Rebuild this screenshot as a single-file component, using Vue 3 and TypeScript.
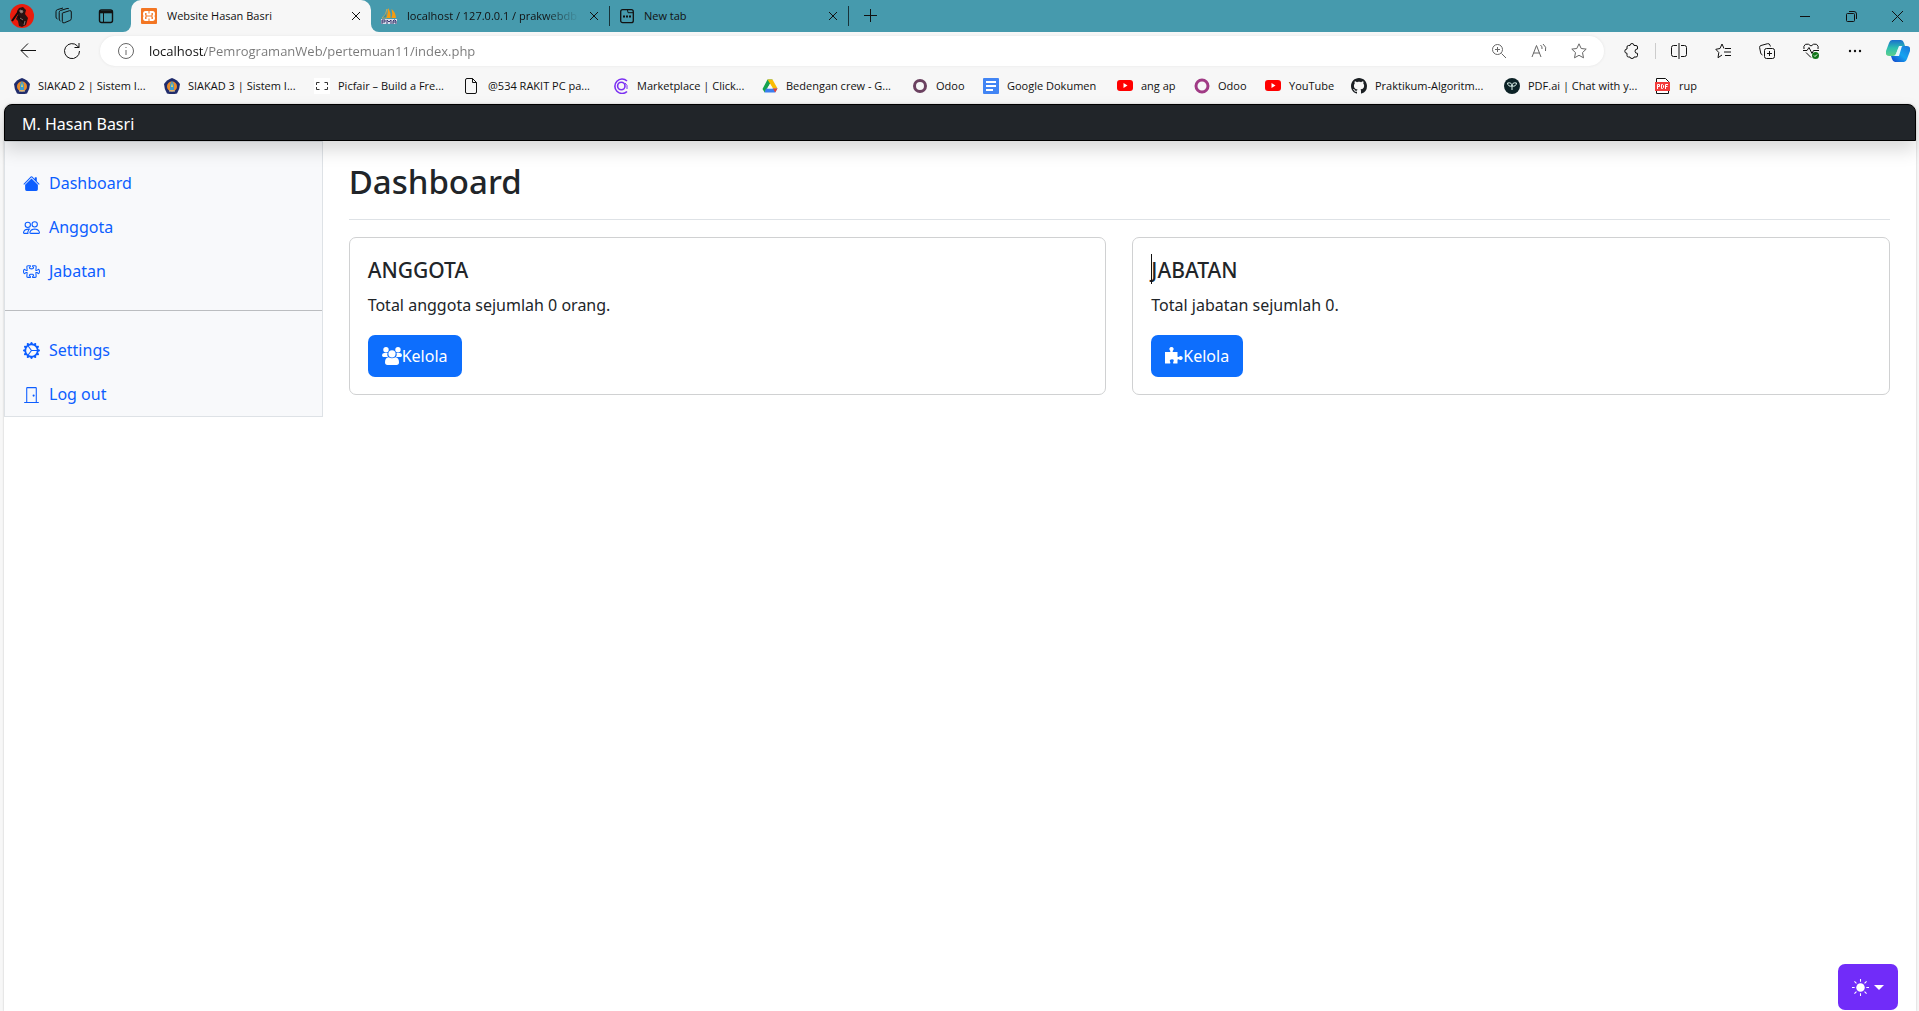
<script setup lang="ts">
import { ref } from 'vue'

interface Bookmark {
  icon: string
  label: string
  width: number
}

interface NavItem {
  icon: string
  label: string
}

const url = ref('localhost/PemrogramanWeb/pertemuan11/index.php')

const bookmarks: Bookmark[] = [
  { icon: 'campus', label: 'SIAKAD 2 | Sistem I...', width: 150 },
  { icon: 'campus', label: 'SIAKAD 3 | Sistem I...', width: 150 },
  { icon: 'frame', label: 'Picfair – Build a Fre...', width: 150 },
  { icon: 'file', label: '@534 RAKIT PC pa...', width: 149 },
  { icon: 'market', label: 'Marketplace | Click...', width: 149 },
  { icon: 'drive', label: 'Bedengan crew - G...', width: 150 },
  { icon: 'odoo-dark', label: 'Odoo', width: 71 },
  { icon: 'docs', label: 'Google Dokumen', width: 134 },
  { icon: 'youtube', label: 'ang ap', width: 77 },
  { icon: 'odoo', label: 'Odoo', width: 71 },
  { icon: 'youtube', label: 'YouTube', width: 86 },
  { icon: 'github', label: 'Praktikum-Algoritm...', width: 153 },
  { icon: 'sprout', label: 'PDF.ai | Chat with y...', width: 151 },
  { icon: 'pdf', label: 'rup', width: 60 },
]

const mainNav: NavItem[] = [
  { icon: 'house', label: 'Dashboard' },
  { icon: 'people', label: 'Anggota' },
  { icon: 'puzzle', label: 'Jabatan' },
]

const userNav: NavItem[] = [
  { icon: 'gear', label: 'Settings' },
  { icon: 'door', label: 'Log out' },
]

const navPaths: Record<string, string[]> = {
  house: [
    'M8.707 1.5a1 1 0 0 0-1.414 0L.646 8.146a.5.5 0 0 0 .708.708L8 2.207l6.646 6.647a.5.5 0 0 0 .708-.708L13 5.793V2.5a.5.5 0 0 0-.5-.5h-1a.5.5 0 0 0-.5.5v1.293z',
    'm8 3.293 6 6V13.5a1.5 1.5 0 0 1-1.5 1.5h-9A1.5 1.5 0 0 1 2 13.5V9.293z',
  ],
  people: [
    'M15 14s1 0 1-1-1-4-5-4-5 3-5 4 1 1 1 1zm-7.978-1L7 12.996c.001-.264.167-1.03.76-1.72C8.312 10.629 9.282 10 11 10c1.717 0 2.687.63 3.24 1.276.593.69.758 1.457.76 1.72l-.008.002-.014.002zM11 7a2 2 0 1 0 0-4 2 2 0 0 0 0 4m3-2a3 3 0 1 1-6 0 3 3 0 0 1 6 0M6.936 9.28a6 6 0 0 0-1.23-.247A7 7 0 0 0 5 9c-4 0-5 3-5 4q0 1 1 1h4.216A2.24 2.24 0 0 1 5 13c0-1.01.377-2.042 1.09-2.904.243-.294.526-.569.846-.816M4.92 10A5.5 5.5 0 0 0 4 13H1c0-.26.164-1.03.76-1.724.545-.636 1.492-1.256 3.16-1.275ZM1.5 5.5a3 3 0 1 1 6 0 3 3 0 0 1-6 0m3-2a2 2 0 1 0 0 4 2 2 0 0 0 0-4',
  ],
  puzzle: [
    'M3.112 3.645A1.5 1.5 0 0 1 4.605 2H7a.5.5 0 0 1 .5.5v.382c0 .696-.497 1.182-.872 1.469a.5.5 0 0 0-.115.118l-.012.025L6.5 4.5v.003l.003.01q.005.015.036.053a.9.9 0 0 0 .27.194C7.09 4.9 7.51 5 8 5c.492 0 .912-.1 1.19-.24a.9.9 0 0 0 .271-.194.2.2 0 0 0 .039-.063v-.009l-.012-.025a.5.5 0 0 0-.115-.118c-.375-.287-.872-.773-.872-1.469V2.5A.5.5 0 0 1 9 2h2.395a1.5 1.5 0 0 1 1.493 1.645L12.645 6.5h.237c.195 0 .42-.147.675-.48.21-.274.528-.52.943-.52.568 0 .947.447 1.154.862C15.877 6.807 16 7.387 16 8s-.123 1.193-.346 1.638c-.207.415-.586.862-1.154.862-.415 0-.733-.246-.943-.52-.255-.333-.48-.48-.675-.48h-.237l.243 2.855A1.5 1.5 0 0 1 11.395 14H9a.5.5 0 0 1-.5-.5v-.382c0-.696.497-1.182.872-1.469a.5.5 0 0 0 .115-.118l.012-.025.001-.006v-.003l-.003-.01a.2.2 0 0 0-.036-.053.9.9 0 0 0-.27-.194C8.91 11.1 8.49 11 8 11s-.912.1-1.19.24a.9.9 0 0 0-.271.194.2.2 0 0 0-.039.063v.009l.012.025c.016.027.05.068.115.118.375.287.872.773.872 1.469v.382a.5.5 0 0 1-.5.5H4.605a1.5 1.5 0 0 1-1.493-1.645L3.356 9.5h-.238c-.195 0-.42.147-.675.48-.21.274-.528.52-.943.52-.568 0-.947-.447-1.154-.862C.123 9.193 0 8.613 0 8s.123-1.193.346-1.638C.553 5.947.932 5.5 1.5 5.5c.415 0 .733.246.943.52.255.333.48.48.675.48h.238zM4.605 3a.5.5 0 0 0-.498.55l.001.007.29 3.4A.5.5 0 0 1 3.9 7.5h-.782c-.696 0-1.182-.497-1.469-.872a.5.5 0 0 0-.118-.115l-.025-.012L1.5 6.5h-.003l-.01.003a.2.2 0 0 0-.053.036.9.9 0 0 0-.194.27C1.1 7.09 1 7.51 1 8c0 .491.1.912.24 1.19.07.14.14.225.194.271a.2.2 0 0 0 .063.039H1.5l.006-.001.025-.012a.5.5 0 0 0 .118-.115c.287-.375.773-.872 1.469-.872H3.9a.5.5 0 0 1 .498.542l-.29 3.408a.5.5 0 0 0 .497.55h1.878c-.048-.166-.195-.352-.463-.557-.274-.21-.52-.528-.52-.943 0-.568.447-.947.862-1.154C6.807 10.123 7.387 10 8 10s1.193.123 1.638.346c.415.207.862.586.862 1.154 0 .415-.246.733-.52.943-.268.205-.415.39-.463.557h1.878a.5.5 0 0 0 .498-.55l-.001-.007-.29-3.4A.5.5 0 0 1 12.1 8.5h.782c.696 0 1.182.497 1.469.872.05.065.091.099.118.115l.025.012.006.001h.003l.01-.003a.2.2 0 0 0 .053-.036.9.9 0 0 0 .194-.27c.14-.28.24-.7.24-1.191s-.1-.912-.24-1.19a.9.9 0 0 0-.194-.271.2.2 0 0 0-.063-.039H14.5l-.006.001-.025.012a.5.5 0 0 0-.118.115c-.287.375-.773.872-1.469.872H12.1a.5.5 0 0 1-.498-.543l.29-3.407a.5.5 0 0 0-.497-.55H9.517c.048.166.195.352.463.557.274.21.52.528.52.943 0 .568-.447.947-.862 1.154C9.193 5.877 8.613 6 8 6s-1.193-.123-1.638-.346C5.947 5.447 5.5 5.068 5.5 4.5c0-.415.246-.733.52-.943.268-.205.415-.39.463-.557z',
  ],
  gear: [
    'M7.068.727c.243-.97 1.62-.97 1.864 0l.071.286a.96.96 0 0 0 1.622.434l.205-.211c.695-.719 1.888-.03 1.613.931l-.08.284a.96.96 0 0 0 1.187 1.187l.283-.081c.96-.275 1.65.918.931 1.613l-.211.205a.96.96 0 0 0 .434 1.622l.286.071c.97.243.97 1.62 0 1.864l-.286.071a.96.96 0 0 0-.434 1.622l.211.205c.719.695.03 1.888-.931 1.613l-.284-.08a.96.96 0 0 0-1.187 1.187l.081.283c.275.96-.918 1.65-1.613.931l-.205-.211a.96.96 0 0 0-1.622.434l-.071.286c-.243.97-1.62.97-1.864 0l-.071-.286a.96.96 0 0 0-1.622-.434l-.205.211c-.695.719-1.888.03-1.613-.931l.08-.284a.96.96 0 0 0-1.186-1.187l-.284.081c-.96.275-1.65-.918-.931-1.613l.211-.205a.96.96 0 0 0-.434-1.622l-.286-.071c-.97-.243-.97-1.62 0-1.864l.286-.071a.96.96 0 0 0 .434-1.622l-.211-.205c-.719-.695-.03-1.888.931-1.613l.284.08a.96.96 0 0 0 1.187-1.186l-.081-.284c-.275-.96.918-1.65 1.613-.931l.205.211a.96.96 0 0 0 1.622-.434zM12.973 8.5H8.25l-2.834 3.779A4.998 4.998 0 0 0 12.973 8.5m0-1a4.998 4.998 0 0 0-7.557-3.779l2.834 3.78zM5.048 3.967l-.087.065zm-.431.355A4.98 4.98 0 0 0 3.002 8c0 1.455.622 2.765 1.615 3.678L7.375 8zm.344 7.646.087.065z',
  ],
  door: [
    'M3 2a1 1 0 0 1 1-1h8a1 1 0 0 1 1 1v13h1.5a.5.5 0 0 1 0 1h-13a.5.5 0 0 1 0-1H3zm1 13h8V2H4z',
    'M9 9a1 1 0 1 0 2 0 1 1 0 0 0-2 0',
  ],
}
</script>

<template>
  <div class="window">
    <div class="tab-strip">
      <div class="strip-tools">
        <button class="tool" aria-label="Profile">
          <svg width="24" height="24" viewBox="0 0 24 24">
            <circle cx="12" cy="12" r="12" fill="#ea1c0d" />
            <path d="M9 4l4-1 3 3-1 4 3 4-2 7-4 2-3-1-1-5-2-2 2-4-1-4z" fill="#2a1212" />
            <path d="M2 17L9 7M8 12l6 7" stroke="#160a0a" stroke-width="2" />
            <path d="M10 6l3 1-1 2-2-1zM10 14l3 2M15 17l-1 4" fill="#a58a84" stroke="#8a746f" stroke-width="1" />
          </svg>
        </button>
        <button class="tool" aria-label="Workspaces">
          <svg width="18" height="18" viewBox="0 0 18 18" class="line">
            <path d="M7.500 6l7-2.300q1.800-.4 1.800 1.300v6.500q0 1.500-1.500 2l-5.500 2.300q-2 .6-2-1.400V7q0-.8.2-1z" />
            <path d="M5.500 14q-1.300-.2-1.300-2V5.500Q4.200 4 5.500 3.500L12 1.500q1.500-.4 2 .5M2.500 12Q1 11.700 1 10V4.500Q1 3 2.500 2.600L8 1" />
          </svg>
        </button>
        <button class="tool" aria-label="Tab actions">
          <svg width="16" height="16" viewBox="0 0 16 16" class="line">
            <rect x="1.500" y="2" width="13" height="12.500" rx="2" stroke-width="1.400" />
            <path d="M1.500 4h13" stroke-width="2.600" />
            <path d="M5.500 5v9" />
          </svg>
        </button>
      </div>

      <div class="tab active">
        <svg width="16" height="16" viewBox="0 0 16 16">
          <rect width="16" height="16" rx="1" fill="#f37623" />
          <path d="M4.500 4h2v2.500h3V4h2q1.500 0 1.500 2t-1.500 2q1.500 0 1.500 2t-1.500 2h-2V9.500h-3V12h-2Q3 12 3 10t1.500-2Q3 8 3 6t1.500-2z" fill="none" stroke="#fff" stroke-width="2" />
        </svg>
        <span class="tab-title">Website Hasan Basri</span>
        <button class="tab-close" aria-label="Close tab">
          <svg width="10" height="10" viewBox="0 0 10 10" class="line"><path d="M1 1l8 8M9 1L1 9" /></svg>
        </button>
      </div>

      <div class="strip-rest">
        <div class="tab">
          <svg width="16" height="16" viewBox="0 0 16 16">
            <path d="M6 1v9H1q4-3 5-9z" fill="#3d8fa0" stroke="#e8b04c" stroke-width=".6" />
            <path d="M7 0q3 4 2.500 10H5.500Q7.500 5 7 0z" fill="#f89c0e" />
            <path d="M10.500 1q4 3 4.500 9h-4.500q1.500-4 0-9z" fill="#f89c0e" />
            <path d="M0 11h16v5H0z" fill="#d5dbe8" />
            <path d="M1 16v-4h3v2H1M6 16v-4l2 2 2-2v4M12 16v-3l1-1h1l1 1v3M12 14h3" fill="none" stroke="#37366f" />
          </svg>
          <span class="tab-title fade">localhost / 127.0.0.1 / prakwebdb</span>
          <button class="tab-close" aria-label="Close tab">
            <svg width="10" height="10" viewBox="0 0 10 10" class="line"><path d="M1 1l8 8M9 1L1 9" /></svg>
          </button>
        </div>
        <div class="tab divided">
          <svg width="14" height="16" viewBox="0 0 14 16" class="line">
            <rect x=".7" y="1.700" width="12.600" height="13" rx="2" stroke-width="1.300" />
            <path d="M7.500 2l.5 2.700h5" />
            <path d="M3 8.500h2M6 8.500h2M9 8.500h2" stroke-width="2" />
          </svg>
          <span class="tab-title">New tab</span>
          <button class="tab-close" aria-label="Close tab">
            <svg width="10" height="10" viewBox="0 0 10 10" class="line"><path d="M1 1l8 8M9 1L1 9" /></svg>
          </button>
        </div>
        <button class="tool new-tab" aria-label="New tab">
          <svg width="14" height="14" viewBox="0 0 14 14" class="line"><path d="M6.500 0v13M0 6.500h13" /></svg>
        </button>

        <div class="window-controls">
          <button class="tool" aria-label="Minimize">
            <svg width="11" height="11" viewBox="0 0 11 11" class="line"><path d="M0 5.500h10" /></svg>
          </button>
          <button class="tool" aria-label="Restore">
            <svg width="11" height="11" viewBox="0 0 11 11" class="line">
              <rect x=".5" y="2.500" width="8" height="8" rx="1" />
              <path d="M3 .5h5q2.500 0 2.500 2.500v5" />
            </svg>
          </button>
          <button class="tool" aria-label="Close">
            <svg width="11" height="11" viewBox="0 0 11 11" class="line"><path d="M0 0l11 11M11 0L0 11" /></svg>
          </button>
        </div>
      </div>
    </div>

    <div class="toolbar">
      <button class="tool" aria-label="Back">
        <svg width="16" height="16" viewBox="0 0 16 16" class="line"><path d="M16 7.500H1M8 .5l-7 7 7 7" /></svg>
      </button>
      <button class="tool" aria-label="Refresh">
        <svg width="18" height="18" viewBox="0 0 18 18" class="line">
          <path d="M16.500 9A7.500 7.500 0 1 1 14.500 4L16 5.500M16 1v4.500h-4.500" />
        </svg>
      </button>
      <div class="address">
        <button class="tool grey" aria-label="Site information">
          <svg width="16" height="16" viewBox="0 0 16 16" class="line">
            <circle cx="8" cy="8" r="7.500" />
            <path d="M8 7v5M8 4v1" />
          </svg>
        </button>
        <input v-model="url" class="url" type="text" aria-label="Address" spellcheck="false" />
        <div class="address-tools">
          <button class="tool grey" aria-label="Zoom">
            <svg width="14" height="14" viewBox="0 0 14 14" class="line">
              <circle cx="5.500" cy="5.500" r="5" />
              <path d="M9.500 9.500L14 14M3 5.500h5M5.500 3v5" />
            </svg>
          </button>
          <button class="tool grey" aria-label="Read aloud">
            <svg width="16" height="16" viewBox="0 0 16 16" class="line">
              <path d="M1 14L5.500 2.500L10 14M2.500 10h6M9.500 2q2 1.500 1.500 4M12 1q4 3 2.500 7" />
            </svg>
          </button>
          <button class="tool grey" aria-label="Add to favorites">
            <svg width="16" height="16" viewBox="0 0 16 16" class="line">
              <path d="M8 .8l2.200 4.700 5 .6-3.700 3.500 1 5.200L8 12.300l-4.500 2.500 1-5.200L.8 6.100l5-.6z" />
            </svg>
          </button>
        </div>
      </div>
      <div class="toolbar-actions">
        <button class="tool" aria-label="Extensions">
          <svg width="16" height="16" viewBox="0 0 16 16" class="line">
            <path d="M4.500 2.500H6q0-2 2-2t2 2h2q1.500 0 1.500 1.500v2q-2.500 0-2.500 2.200t2.500 2.200V12.500q0 1.500-1.500 1.500h-2q0 1.500-2 1.500T6 14H4.500Q3 14 3 12.500v-2.200Q.8 10.300.8 8.200T3 6V4q0-1.500 1.500-1.500z" />
          </svg>
        </button>
        <span class="separator"></span>
        <button class="tool" aria-label="Split screen">
          <svg width="16" height="16" viewBox="0 0 16 16" class="line">
            <path d="M6 2.500H2.500Q.5 2.500.5 4.500v7q0 2 2 2H6M10 2.500h3.500q2 0 2 2v7q0 2-2 2H10M8 0v16" />
          </svg>
        </button>
        <button class="tool" aria-label="Favorites">
          <svg width="16" height="16" viewBox="0 0 16 16" class="line">
            <path d="M9 5.500L7 1 5 5.500.8 6.300l3 3.200-.8 5.200L7 12M10 5.500h6M9 9h7M10 12.500h6" />
          </svg>
        </button>
        <button class="tool" aria-label="Collections">
          <svg width="16" height="16" viewBox="0 0 16 16" class="line">
            <rect x="5.500" y="5.500" width="10" height="10" rx="2" />
            <path d="M10.500 8v5M8 10.500h5M3.500 12Q2 11.500 1.700 10L.6 4.500Q.3 3 2 2.500L8.500.7q2-.4 2.500 1.500l.4 1.300" />
          </svg>
        </button>
        <button class="tool" aria-label="Browser essentials">
          <svg width="16" height="16" viewBox="0 0 16 16" class="line">
            <path d="M1 6Q0 3 2.500 1.300 5.500.2 8 3q2.500-2.800 5.500-1.700Q16 3 15 6M3 9.500l5 5M0 7.500h4L6 4.500l3 6 1.500-3H16" />
            <circle cx="12.500" cy="12.500" r="3.500" fill="#12751a" stroke="none" />
            <path d="M11 12.500l1 1 2-2" stroke="#fff" />
          </svg>
        </button>
        <button class="tool" aria-label="Settings and more">
          <svg width="14" height="4" viewBox="0 0 14 4">
            <circle cx="2" cy="2" r="1.200" /><circle cx="7" cy="2" r="1.200" /><circle cx="12" cy="2" r="1.200" />
          </svg>
        </button>
        <button class="tool copilot" aria-label="Copilot">
          <svg width="24" height="22" viewBox="0 0 24 22">
            <defs>
              <linearGradient id="copilot-left" x1="0" y1="0" x2="0" y2="1">
                <stop offset="0" stop-color="#1a6fce" /><stop offset=".5" stop-color="#2dbfb0" /><stop offset="1" stop-color="#5fd08c" />
              </linearGradient>
              <linearGradient id="copilot-right" x1="0" y1="1" x2="1" y2="0">
                <stop offset="0" stop-color="#1440c8" /><stop offset=".5" stop-color="#15a4f0" /><stop offset="1" stop-color="#1b74d8" />
              </linearGradient>
            </defs>
            <path d="M6 0h9q2 0 3 3l1 3h-4q-2 0-3 3l-2 5q-1 2-3 2H3q-4 0-3-5L3 3q1-3 3-3z" fill="url(#copilot-left)" />
            <path d="M18 22H9q-2 0-3-3l-1-3h4q2 0 3-3l2-5q1-2 3-2h4q4 0 3 5l-3 8q-1 3-3 3z" fill="url(#copilot-right)" />
            <path d="M10 14l3-8h3l-3 10h-4z" fill="#e8f7fc" />
          </svg>
        </button>
      </div>
    </div>

    <nav class="bookmarks" aria-label="Bookmarks">
      <a v-for="(mark, i) in bookmarks" :key="i" href="#" class="bookmark" :style="{ width: mark.width + 'px' }">
        <svg width="16" height="16" viewBox="0 0 16 16">
          <g v-if="mark.icon === 'campus'">
            <path d="M8 0q5 1.500 8 6-.2 5-3 9.500Q8 16.500 3 15.500.2 11 0 6 3 1.500 8 0z" fill="#202c6c" />
            <circle cx="8" cy="8.500" r="5" fill="#e88b2e" />
            <path d="M8 3l2 3.500V12H6V6.500z" fill="#3c9bd0" />
            <path d="M8 5l1 4H7z" fill="#f7dd4a" />
            <path d="M5 13h6" stroke="#e8d9a0" />
          </g>
          <g v-else-if="mark.icon === 'frame'">
            <rect width="16" height="16" fill="#fff" />
            <path d="M2.500 7V4.500h3M10.500 4.500h3V7M13.500 9v2.500h-3M5.500 11.500h-3V9" fill="none" stroke="#333" />
          </g>
          <path v-else-if="mark.icon === 'file'" d="M1.500 2Q1.500.5 3 .5h5.500l4 4V14q0 1.500-1.500 1.500H3Q1.500 15.500 1.500 14zM8.500.5v4h4" fill="none" stroke="#111" />
          <g v-else-if="mark.icon === 'market'" fill="none" stroke="#7b2ff2">
            <path d="M14 3a7.200 7.200 0 1 0 0 10.500" stroke-width="1.600" />
            <circle cx="8.300" cy="8" r="3.700" stroke-width="1.600" />
            <path d="M12 5q3 2 2 6" />
          </g>
          <g v-else-if="mark.icon === 'drive'">
            <path d="M5.500 1.500h5l-7.800 13L.5 11z" fill="#16a34f" />
            <path d="M5.500 1.500h5l5 9H11z" fill="#fbbc04" />
            <path d="M4 10.500h11.500L13 14.500H2.500z" fill="#3b7ef0" />
            <path d="M11 10.500h4.500l-2.300 4z" fill="#ea4335" />
            <path d="M8 6l2.600 4.500H5.400z" fill="#f7f7f7" />
          </g>
          <circle v-else-if="mark.icon === 'odoo-dark'" cx="8" cy="8" r="5.500" fill="none" stroke="#6b4160" stroke-width="3" />
          <circle v-else-if="mark.icon === 'odoo'" cx="8" cy="8" r="6" fill="none" stroke="#a03b85" stroke-width="3" />
          <g v-else-if="mark.icon === 'docs'">
            <rect width="16" height="16" rx="1" fill="#4285f4" />
            <path d="M3 4h10M3 8h10M3 12h7" stroke="#fff" stroke-width="2" />
          </g>
          <g v-else-if="mark.icon === 'youtube'">
            <rect y="2" width="16" height="11" rx="3" fill="#f00" />
            <path d="M6.500 5l4 2.500-4 2.500z" fill="#fff" />
          </g>
          <path v-else-if="mark.icon === 'github'" fill="#1b1f23" d="M8 0C3.580 0 0 3.580 0 8c0 3.540 2.290 6.530 5.470 7.590.4.070.55-.17.55-.38 0-.19-.010-.82-.010-1.490-2.010.37-2.530-.49-2.690-.94-.090-.23-.48-.94-.82-1.130-.28-.15-.68-.52-.010-.53.63-.010 1.080.58 1.230.82.72 1.210 1.870.87 2.330.66.070-.52.28-.87.51-1.070-1.780-.2-3.640-.89-3.640-3.950 0-.87.31-1.590.82-2.150-.080-.2-.36-1.020.080-2.120 0 0 .67-.21 2.200.82.64-.18 1.320-.27 2-.27s1.360.09 2 .27c1.530-1.040 2.200-.82 2.200-.82.44 1.100.16 1.920.08 2.120.51.56.82 1.270.82 2.150 0 3.070-1.870 3.750-3.650 3.950.29.25.54.73.54 1.480 0 1.070-.010 1.930-.010 2.200 0 .21.15.46.55.38A8.010 8.010 0 0 0 16 8c0-4.420-3.580-8-8-8" />
          <g v-else-if="mark.icon === 'sprout'">
            <circle cx="8" cy="8" r="8" fill="#0c2226" />
            <path d="M8 12V8M8 8Q4 9 3.500 5 8 4 8 8q0-4 4.500-3Q12 9 8 8z" fill="none" stroke="#dff5ee" />
          </g>
          <g v-else>
            <path d="M1.500 15.500V.5h9l3 3v12z" fill="#fff" stroke="#111" />
            <rect y="4" width="15" height="9" fill="#f33b3b" />
            <path d="M2.500 11V6.500h2v2h-2M6.500 6.500h1l1 1v2l-1 1h-1zM10.500 11V6.500H13M10.500 8.500h2" fill="none" stroke="#fff" />
          </g>
        </svg>
        <span>{{ mark.label }}</span>
      </a>
    </nav>

    <div class="page">
      <header class="brand-bar">
        <a href="#" class="brand">M. Hasan Basri</a>
      </header>

      <div class="columns">
        <aside class="sidebar">
          <ul>
            <li v-for="item in mainNav" :key="item.label">
              <a href="#">
                <svg width="17" height="17" viewBox="0 0 16 16"><path v-for="d in navPaths[item.icon]" :key="d" :d="d" /></svg>
                {{ item.label }}
              </a>
            </li>
          </ul>
          <hr />
          <ul>
            <li v-for="item in userNav" :key="item.label">
              <a href="#">
                <svg width="17" height="17" viewBox="0 0 16 16"><path v-for="d in navPaths[item.icon]" :key="d" :d="d" /></svg>
                {{ item.label }}
              </a>
            </li>
          </ul>
        </aside>

        <main class="content">
          <h1>Dashboard</h1>
          <div class="cards">
            <section class="card">
              <h2>ANGGOTA</h2>
              <p>Total anggota sejumlah 0 orang.</p>
              <a href="#" class="manage">
                <svg width="20" height="18" viewBox="0 0 20 18">
                  <circle cx="4" cy="2.700" r="2.700" /><circle cx="16" cy="2.700" r="2.700" />
                  <path d="M2 6h3.500q-.8 2.200.5 4H1.500Q0 10 0 8.300 0 6.500 2 6zM14.500 6H18q2 .5 2 2.300T18.500 10H14q1.300-1.800.5-4z" />
                  <circle cx="10" cy="6.800" r="3.600" />
                  <path d="M6.500 10.300q3.500 2 7 0 3.500.7 3.500 5Q17 18 14.500 18h-9Q3 18 3 15.300q0-4.300 3.500-5z" />
                </svg>
                <span>Kelola</span>
              </a>
            </section>
            <section class="card">
              <h2 class="caret">JABATAN</h2>
              <p>Total jabatan sejumlah 0.</p>
              <a href="#" class="manage">
                <svg width="18" height="18" viewBox="0 0 18 18">
                  <path d="M0 5h5q.8-.5 0-1.500Q4 2.500 4.500 1.200 5 0 6.500 0T8.500 1.200Q9 2.500 8 3.500 7.200 4.500 8 5h4.500v4.500q.5 1 1.500.2 1.500-1.200 3-.2 1.500 1.500 0 3-1.300 1-2.800 0-1.200-.8-1.700.2V16.500H8.500q-.8-.5 0-2Q9.500 12.500 7 12.300 4 12.500 5 14.500q.8 1.500 0 2H0z" />
                </svg>
                <span>Kelola</span>
              </a>
            </section>
          </div>
        </main>
      </div>

      <button class="theme" aria-label="Toggle theme">
        <svg width="17" height="17" viewBox="0 0 16 16">
          <circle cx="8" cy="8" r="4" />
          <path d="M8 0v2.500M8 13.500V16M0 8h2.500M13.500 8H16M2.300 2.300l1.900 1.900M11.800 11.800l1.900 1.900M2.300 13.700l1.900-1.900M11.800 4.200l1.900-1.900" stroke="#fff" />
        </svg>
        <svg width="10" height="5" viewBox="0 0 10 5"><path d="M0 0h10L5 5z" /></svg>
      </button>
    </div>
  </div>
</template>

<style>
body {
  margin: 0;
  background: #f7f7f7;
}
</style>

<style scoped>
* {
  box-sizing: border-box;
}

.window {
  display: flex;
  flex-direction: column;
  min-height: 100vh;
  background: #f7f7f7;
  color: #111;
  font-family: "Open Sans", "Noto Sans", sans-serif;
  font-size: 11px;
}

a {
  color: inherit;
  text-decoration: none;
}

button {
  border: 0;
  background: none;
  color: inherit;
  font: inherit;
}

svg {
  flex: none;
  display: block;
  fill: currentColor;
}

svg.line {
  fill: none;
  stroke: currentColor;
  stroke-width: 1;
}

.tool {
  display: flex;
  align-items: center;
  justify-content: center;
  flex: none;
  width: 24px;
  height: 24px;
  padding: 0;
}

.grey {
  color: #666;
}

/* Tab strip */
.tab-strip {
  display: flex;
  height: 32px;
  background: linear-gradient(#469aad 16px, #f7f7f7 16px);
}

.strip-tools {
  display: flex;
  align-items: center;
  gap: 18px;
  width: 131px;
  padding-left: 10px;
  border-bottom-right-radius: 8px;
  background: #469aad;
}

.strip-rest {
  display: flex;
  flex: 1;
  border-bottom-left-radius: 8px;
  background: #469aad;
}

.tab {
  display: flex;
  align-items: center;
  gap: 10px;
  width: 238px;
  padding: 0 10px 0 10px;
}

.tab.active {
  width: 240px;
  background: #f7f7f7;
  border-radius: 10px 10px 0 0;
}

.tab.divided {
  width: 240px;
  border: solid #17333a;
  border-width: 0 1px;
  border-image: linear-gradient(transparent 20%, #17333a 20%, #17333a 80%, transparent 80%) 1;
}

.tab-title {
  flex: 1;
  min-width: 0;
  overflow: hidden;
  white-space: nowrap;
  line-height: 16px;
}

.fade {
  mask-image: linear-gradient(to right, #000 80%, transparent);
}

.tab-close {
  display: flex;
  padding: 0;
}

.new-tab {
  height: 32px;
  margin-left: 10px;
}

.window-controls {
  display: flex;
  align-items: center;
  gap: 22px;
  margin-left: auto;
  padding-right: 10px;
}

/* Toolbar */
.toolbar {
  display: flex;
  align-items: center;
  height: 38px;
  gap: 20px;
  padding: 0 9px 0 16px;
}

.address {
  display: flex;
  align-items: center;
  flex: 1;
  gap: 11px;
  height: 30px;
  margin-left: -4px;
  padding: 0 13px 0 14px;
  border-radius: 15px;
  background: #fff;
  box-shadow: 0 0 3px #e4e4e4;
}

.url {
  flex: 1;
  min-width: 0;
  padding: 0;
  border: 0;
  outline: 0;
  font: inherit;
  font-size: 13px;
  color: transparent;
  background: linear-gradient(to right, #111 56px, #777 56px);
  background-clip: text;
}

.address-tools {
  display: flex;
  gap: 16px;
}

.toolbar-actions {
  display: flex;
  align-items: center;
  gap: 20px;
  margin-left: -4px;
}

.separator {
  width: 1px;
  height: 16px;
  margin: 0 -9px;
  background: #ccc;
}

.copilot {
  margin-left: -1px;
}

/* Bookmarks */
.bookmarks {
  display: flex;
  align-items: center;
  height: 34px;
  padding: 0 0 2px 14px;
  overflow: hidden;
}

.bookmark {
  display: flex;
  align-items: center;
  flex: none;
  gap: 8px;
  white-space: nowrap;
  line-height: 16px;
}

/* Web page */
.page {
  position: relative;
  flex: 1;
  margin: 0 3px 0 4px;
  border-radius: 8px 8px 0 0;
  background: #fff;
  box-shadow: 0 0 2px #bbb;
  color: #212529;
  font-family: "Noto Sans", "Open Sans", sans-serif;
  font-size: 16px;
  line-height: 26px;
}

.brand-bar {
  position: relative;
  display: flex;
  align-items: center;
  height: 37px;
  padding: 2px 17px 0;
  border: 1px solid #000;
  border-radius: 8px 8px 0 0;
  background: #212529;
  color: #fff;
  box-shadow: 0 9px 18px rgba(0, 0, 0, 0.15);
}

.columns {
  display: grid;
  grid-template-columns: 1fr 5fr;
  align-items: start;
}

.sidebar {
  padding-top: 19px;
  border: 1px solid #dee2e6;
  background: #f8f9fb;
  color: #0d5eff;
}

.sidebar ul {
  margin: 0;
  padding: 0;
  list-style: none;
}

.sidebar a {
  display: flex;
  align-items: center;
  gap: 9px;
  height: 44px;
  padding: 0 18px;
}

.sidebar hr {
  margin: 17px 0;
  border: 0;
  border-top: 1px solid #bbbdc0;
}

.content {
  padding: 20px 26px 0;
}

h1 {
  margin: 0 0 17px;
  padding-bottom: 16px;
  border-bottom: 1px solid #dee2e6;
  font-size: 33px;
  font-weight: 500;
  line-height: 42px;
}

.cards {
  display: grid;
  grid-template-columns: 1fr 1fr;
  gap: 26px;
}

.card {
  padding: 18px 18px 17px;
  border: 1px solid #d0d1d2;
  border-radius: 7px;
}

h2 {
  margin: 0 0 8px;
  font-size: 21px;
  font-weight: 500;
  line-height: 28px;
}

.caret::before {
  content: "";
  position: absolute;
  width: 1px;
  height: 30px;
  margin-top: -2px;
  background: #111;
}

.card p {
  margin: 0 0 17px;
}

.manage {
  display: inline-flex;
  align-items: center;
  height: 42px;
  padding: 0 14px;
  border-radius: 7px;
  background: #0d6efd;
  color: #fff;
  vertical-align: top;
}

.theme {
  position: fixed;
  right: 21px;
  bottom: 1px;
  display: flex;
  align-items: center;
  gap: 5px;
  height: 46px;
  padding: 0 14px;
  border-radius: 7px;
  background: #712cf9;
  color: #fff;
}
</style>
